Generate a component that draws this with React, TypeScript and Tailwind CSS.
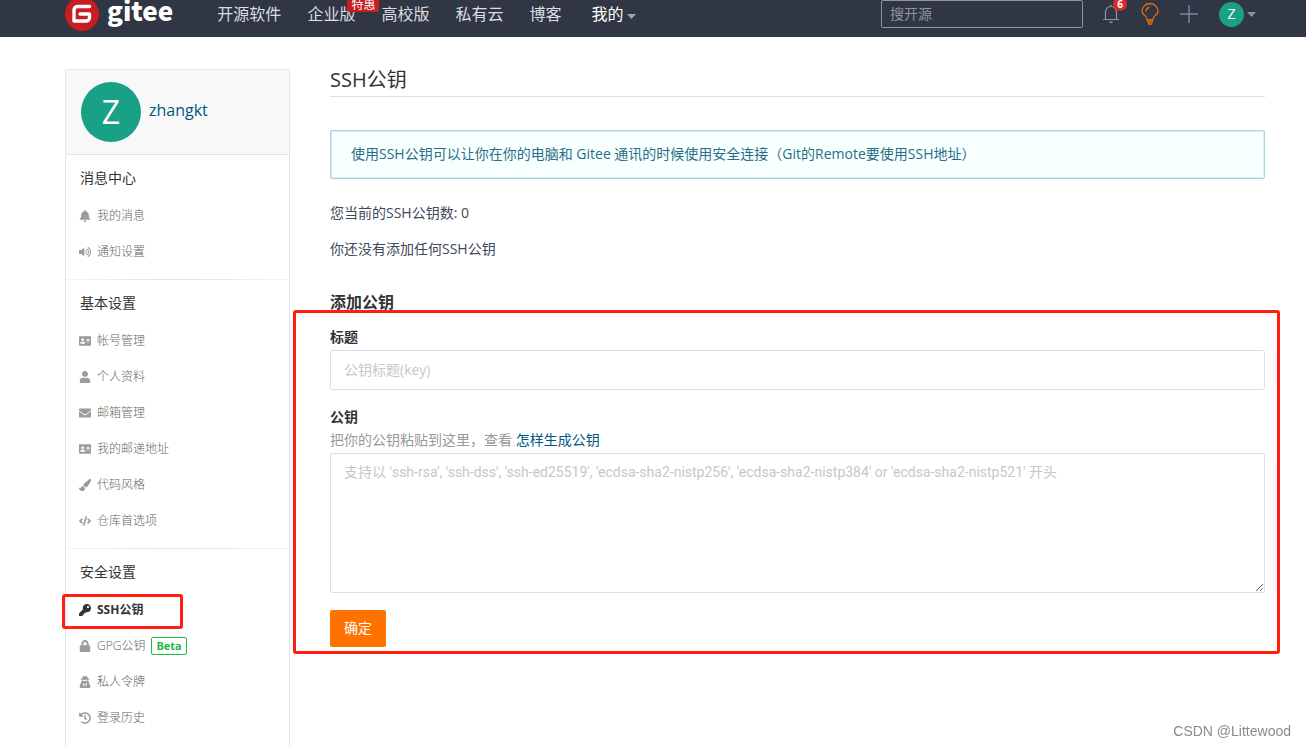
import type { ReactNode } from "react";
import type { IconType } from "react-icons";
import {
  FaAddressCard,
  FaBell,
  FaCode,
  FaEnvelope,
  FaHistory,
  FaKey,
  FaLock,
  FaPaintBrush,
  FaUser,
  FaUserSecret,
  FaVolumeUp,
} from "react-icons/fa";

interface MenuItem {
  label: string;
  icon: IconType;
  active?: boolean;
  tag?: string;
}

interface MenuSection {
  title: string;
  items: MenuItem[];
}

const sections: MenuSection[] = [
  {
    title: "消息中心",
    items: [
      { label: "我的消息", icon: FaBell },
      { label: "通知设置", icon: FaVolumeUp },
    ],
  },
  {
    title: "基本设置",
    items: [
      { label: "帐号管理", icon: FaAddressCard },
      { label: "个人资料", icon: FaUser },
      { label: "邮箱管理", icon: FaEnvelope },
      { label: "我的邮递地址", icon: FaAddressCard },
      { label: "代码风格", icon: FaPaintBrush },
      { label: "仓库首选项", icon: FaCode },
    ],
  },
  {
    title: "安全设置",
    items: [
      { label: "SSH公钥", icon: FaKey, active: true },
      { label: "GPG公钥", icon: FaLock, tag: "Beta" },
      { label: "私人令牌", icon: FaUserSecret },
      { label: "登录历史", icon: FaHistory },
    ],
  },
];

function Caret() {
  return (
    <svg width="9" height="5" viewBox="0 0 9 5" fill="currentColor">
      <path d="M0 0h9L4.5 5z" />
    </svg>
  );
}

function Logo() {
  return (
    <a href="#" className="flex items-center gap-2 text-white">
      <svg width="34" height="34" viewBox="0 0 34 34" fill="none">
        <circle cx="17" cy="17" r="17" fill="#c71d23" />
        <path
          d="M24.500 9.500H12.500a3.500 3.500 0 0 0-3.500 3.500v11h12a3.500 3.500 0 0 0 3.500-3.500v-3.500H15"
          stroke="#fff"
          strokeWidth="3.400"
          strokeLinecap="round"
          strokeLinejoin="round"
        />
      </svg>
      <span className="pb-2 font-['Noto_Sans_CJK_SC',sans-serif] text-[26px] leading-8 font-black">gitee</span>
    </a>
  );
}

function NavLink({ children }: { children: ReactNode }) {
  return (
    <a href="#" className="relative text-base whitespace-nowrap text-[#dcdde0]">
      {children}
    </a>
  );
}

function TopBar() {
  return (
    <header className="flex h-[37px] shrink-0 items-center overflow-hidden bg-[#303643] pr-[50px] pb-[9px] pl-[65px]">
      <Logo />
      <nav className="ml-11 flex items-center gap-[26px]">
        <NavLink>开源软件</NavLink>
        <NavLink>
          企业版
          <span className="absolute -top-1 left-10 rounded-xs bg-[#c71d23] px-1 text-xs leading-[14px] text-white">
            特惠
          </span>
        </NavLink>
        <NavLink>高校版</NavLink>
        <NavLink>私有云</NavLink>
        <NavLink>博客</NavLink>
        <button className="ml-1 flex items-center gap-1 text-base whitespace-nowrap text-white">
          我的
          <span className="pt-1 text-[#a0a3a9]">
            <Caret />
          </span>
        </button>
      </nav>

      <input
        type="text"
        aria-label="搜开源"
        placeholder="搜开源"
        className="ml-auto h-7 w-[202px] rounded-xs border border-[#8c92a4] px-2 pb-0.5 text-sm text-white placeholder:text-[#8f939c]"
      />

      <div className="ml-[18px] flex items-center gap-5">
        <button aria-label="通知" className="relative flex h-5 w-5 items-center justify-center">
          <svg width="18" height="20" viewBox="0 0 18 20" fill="none" stroke="#8c92a4" strokeWidth="1.2">
            <path d="M3.500 15.500V8a5.500 5.500 0 0 1 11 0v7.500M1 15.500h16M9 2.500V.5" />
            <path d="M6.500 17.500h5L9 19.600z" fill="#8c92a4" stroke="none" />
          </svg>
          <span className="absolute -top-[7px] left-3 flex h-[14px] w-[14px] items-center justify-center rounded-full bg-[#db2828] text-[10px] font-bold text-white">
            6
          </span>
        </button>
        <button aria-label="建议" className="flex h-[22px] w-[18px] items-center justify-center">
          <svg width="18" height="22" viewBox="0 0 18 22" fill="none" stroke="#e8710a" strokeWidth="1.300">
            <path d="M6 17c0-3-1-3.400-2.700-5A7.300 7.300 0 0 1 1 8.500a8 8 0 0 1 16 0c0 1.400-.8 2.500-2.300 3.500C13 13.600 12 14 12 17z" />
            <path d="M5 8.500a4 4 0 0 1 3.500-4M6 19h6M7 21h4" />
          </svg>
        </button>
        <button aria-label="新建" className="flex h-[18px] w-5 items-center justify-center">
          <svg width="18" height="18" viewBox="0 0 18 18" stroke="#7e84a3" strokeWidth="1.400">
            <path d="M9 0v18M0 9h18" />
          </svg>
        </button>
        <button aria-label="zhangkt" className="flex items-center gap-[3px] text-[#8c92a4]">
          <span className="flex h-[25px] w-[25px] items-center justify-center rounded-full bg-[#19a185] text-sm text-white">
            Z
          </span>
          <Caret />
        </button>
      </div>
    </header>
  );
}

function SideItem({ item }: { item: MenuItem }) {
  const Icon = item.icon;

  return (
    <li className="relative">
      <a
        href="#"
        className={
          item.active
            ? "flex h-9 items-center pl-[13px] text-xs font-bold text-[#333]"
            : "flex h-9 items-center pl-[13px] text-xs font-light text-[#666]"
        }
      >
        <Icon size={12} className={item.active ? "mr-1.5 text-[#333]" : "mr-1.5 text-[#9b9b9b]"} />
        {item.label}
        {item.tag && (
          <span className="ml-1.5 rounded-xs border border-[#21ba45] px-1 text-[11px] leading-4 font-bold text-[#21ba45]">
            {item.tag}
          </span>
        )}
      </a>
      {/* red frame round the current entry */}
      {item.active && (
        <div className="pointer-events-none absolute top-0.5 -left-1 h-[35px] w-[121px] rounded-[3px] border-3 border-[#ff1e10]" />
      )}
    </li>
  );
}

function Sidebar() {
  return (
    <aside className="w-[225px] shrink-0 rounded-t-xs border border-b-0 border-[#e3e6eb]">
      <div className="flex h-[85px] gap-2 border-b border-[#dfe5ee] bg-[#f8f8f8] pt-3 pl-[15px]">
        <span className="flex h-[60px] w-[60px] items-center justify-center rounded-full bg-[#19a185] text-[32px] text-white">
          Z
        </span>
        <a href="#" className="pt-4 text-base text-[#005980]">
          zhangkt
        </a>
      </div>
      {sections.map((section, i) => (
        <div key={section.title}>
          {i > 0 && <div className="h-px bg-linear-to-r from-[#f4f4f4] via-[#e2e2e2] to-[#f4f4f4]" />}
          <section className="pt-3 pb-[9px]">
            <h2 className="mb-[9px] pl-[14px] text-sm leading-[22px] text-[#333]">{section.title}</h2>
            <ul>
              {section.items.map((item) => (
                <SideItem key={item.label} item={item} />
              ))}
            </ul>
          </section>
        </div>
      ))}
    </aside>
  );
}

function KeyForm() {
  return (
    <form className="relative text-sm" onSubmit={(e) => e.preventDefault()}>
      <label htmlFor="key-title" className="block leading-5 font-bold text-[#333]">
        标题
      </label>
      <input
        id="key-title"
        type="text"
        placeholder="公钥标题(key)"
        className="mt-[3px] block h-10 w-full rounded-xs border border-[#dcdfe6] px-[13px] pb-0.5 placeholder:text-[#c7c7c7]"
      />

      <label htmlFor="key-body" className="mt-[17px] block leading-5 font-bold text-[#333]">
        公钥
      </label>
      <p className="mt-[3px] leading-5 text-[#999]">
        把你的公钥粘贴到这里，查看{" "}
        <a href="#" className="text-[#005980]">
          怎样生成公钥
        </a>
      </p>
      <textarea
        id="key-body"
        placeholder="支持以 'ssh-rsa', 'ssh-dss', 'ssh-ed25519', 'ecdsa-sha2-nistp256', 'ecdsa-sha2-nistp384' or 'ecdsa-sha2-nistp521' 开头"
        className="mt-[3px] block h-[140px] w-full rounded-xs border border-[#dcdfe6] px-[13px] py-2 font-[Roboto,'Noto_Sans_CJK_SC',sans-serif] leading-5 placeholder:text-[#c7c7c7]"
      />

      <button type="submit" className="mt-[17px] h-[37px] rounded-xs bg-[#fe7300] px-[14px] pb-0.5 text-white">
        确定
      </button>

      {/* red frame round the whole form */}
      <div className="pointer-events-none absolute -top-[17px] -right-[15px] -bottom-[7px] -left-[37px] rounded-[3px] border-3 border-[#ff1e10]" />
    </form>
  );
}

export default function App() {
  return (
    <div className="flex min-h-screen flex-col bg-white font-['Open_Sans','Noto_Sans_CJK_SC',sans-serif] text-[#40485b]">
      <TopBar />
      <div className="flex flex-1 gap-10 pt-8 pr-[41px] pl-[65px]">
        <Sidebar />
        <main className="min-w-0 flex-1 text-sm">
          <h1 className="h-7 border-b border-[#e0e0e0] text-xl leading-[22px] text-[#333]">SSH公钥</h1>
          <div className="mt-[33px] rounded-xs border border-[#a9d5de] bg-[#f8ffff] px-5 pt-[13px] pb-[14px] leading-5 text-[#276f86] ring-1 ring-[#a9d5de]/40 ring-inset">
            使用SSH公钥可以让你在你的电脑和 Gitee 通讯的时候使用安全连接（Git的Remote要使用SSH地址）
          </div>
          <p className="mt-6 leading-5">您当前的SSH公钥数: 0</p>
          <p className="mt-4 leading-5">你还没有添加任何SSH公钥</p>
          <h3 className="mt-8 mb-[14px] text-base leading-[22px] font-bold text-[#333]">添加公钥</h3>
          <KeyForm />
        </main>
      </div>
      <div className="fixed right-[15px] bottom-[5px] font-['Liberation_Sans',sans-serif] text-sm leading-5 text-[#8a8a8a]">
        CSDN @Littewood
      </div>
    </div>
  );
}
